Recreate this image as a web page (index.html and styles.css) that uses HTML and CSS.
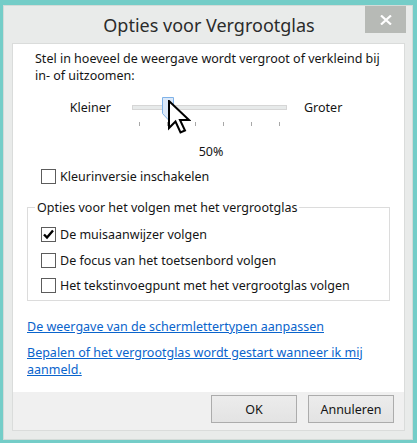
FILE: index.html
```html
<!DOCTYPE html>
<html lang="nl">
<head>
<meta charset="utf-8">
<title>Opties voor Vergrootglas</title>
<link rel="stylesheet" href="styles.css">
</head>
<body>
<div class="window">
  <div class="titlebar">
    <span class="title">Opties voor Vergrootglas</span>
    <div class="close"><svg width="12" height="10" viewBox="0 0 12 10"><path d="M1 0.5 L11 9.5 M11 0.5 L1 9.5" stroke="#fff" stroke-width="2.2"/></svg></div>
  </div>
  <div class="panel">
    <div class="content">
      <p class="intro">Stel in hoeveel de weergave wordt vergroot of verkleind bij<br>in- of uitzoomen:</p>
      <div class="slider-row">
        <span class="lbl-left">Kleiner</span>
        <div class="slider">
          <div class="track"></div>
          <svg class="thumb" width="12" height="23" viewBox="0 0 12 23"><path d="M0.5 0.5 H11.5 V16.5 L6 22.5 L0.5 16.5 Z" fill="#dce9f9" stroke="#7fb2e8"/></svg>
          <div class="ticks"><i></i><i></i><i></i><i></i><i></i><i></i></div>
          <svg class="cursor" width="23" height="34" viewBox="0 0 23 34"><path d="M1 1 V28 L7.5 21.5 L12.5 32.5 L17 30.5 L12 20 H21 Z" fill="#fff" stroke="#000" stroke-width="2" stroke-linejoin="miter"/></svg>
        </div>
        <span class="lbl-right">Groter</span>
      </div>
      <div class="percent">50%</div>
      <div class="check first"><span class="box"></span>Kleurinversie inschakelen</div>
      <fieldset class="group">
        <legend>Opties voor het volgen met het vergrootglas</legend>
        <div class="check"><span class="box checked"><svg width="13" height="13" viewBox="0 0 13 13"><path d="M2 6.5 L5 9.5 L11 2.5" fill="none" stroke="#000" stroke-width="2.4"/></svg></span>De muisaanwijzer volgen</div>
        <div class="check"><span class="box"></span>De focus van het toetsenbord volgen</div>
        <div class="check"><span class="box"></span>Het tekstinvoegpunt met het vergrootglas volgen</div>
      </fieldset>
      <a class="link l1" href="#">De weergave van de schermlettertypen aanpassen</a>
      <a class="link l2" href="#">Bepalen of het vergrootglas wordt gestart wanneer ik mij<br>aanmeld.</a>
    </div>
    <div class="footer">
      <button class="btn">OK</button>
      <button class="btn">Annuleren</button>
    </div>
  </div>
</div>
</body>
</html>
```
FILE: styles.css
```css
html, body {
  margin: 0;
  padding: 0;
  background: #74cdc8;
}
body {
  font-family: "Noto Sans", "Open Sans", sans-serif;
  font-size: 12.5px;
  color: #151515;
  width: 417px;
  height: 443px;
  overflow: hidden;
}
.window {
  position: relative;
  margin: 5px 0 0 3px;
  width: 410px;
  height: 435px;
  box-sizing: border-box;
  border: 1px solid #d3dbd8;
  background: #e9ebea;
  padding: 0 7px 8px 8px;
  display: flex;
  flex-direction: column;
}
.titlebar {
  height: 37px;
  display: flex;
  align-items: center;
  justify-content: center;
  flex: none;
}
.title {
  font-size: 18px;
  color: #2b2b2b;
  margin-top: 1px;
  margin-left: 1px;
}
.close {
  position: absolute;
  top: 0;
  right: 6px;
  width: 41px;
  height: 27px;
  background: #b7bab6;
  display: flex;
  align-items: center;
  justify-content: center;
}
.panel {
  flex: 1;
  border: 1px solid #dadcdb;
  background: #fff;
  display: flex;
  flex-direction: column;
}
.content {
  flex: 1;
  padding: 6px 14px 0 14px;
  line-height: 17px;
}
.intro {
  margin: 0 0 0 8px;
}
.slider-row {
  display: grid;
  grid-template-columns: 105px 155px 1fr;
  margin-top: 13px;
  height: 30px;
}
.lbl-left {
  text-align: right;
  padding-right: 21px;
  align-self: start;
  margin-top: 2px;
}
.lbl-right {
  padding-left: 17px;
  align-self: start;
  margin-top: 2px;
}
.slider {
  position: relative;
  height: 30px;
}
.track {
  margin-top: 8px;
  height: 3px;
  border: 1px solid #d6d6d6;
  background: #e7eaea;
}
.ticks {
  display: flex;
  justify-content: space-between;
  margin: 12px 7px 0 7px;
}
.ticks i {
  display: block;
  width: 1px;
  height: 4px;
  background: #a8a8a8;
}
.thumb {
  position: absolute;
  left: 30px;
  top: 0;
}
.cursor {
  position: absolute;
  left: 36px;
  top: 3px;
}
.percent {
  margin-top: 16px;
  text-align: center;
  padding-left: 5px;
}
.check {
  display: flex;
  align-items: center;
  height: 17px;
  margin-left: 14px;
}
.check.first {
  margin-top: 8px;
}
.box {
  width: 13px;
  height: 13px;
  border: 1px solid #5c5c5c;
  background: #fff;
  margin-right: 4px;
  flex: none;
  position: relative;
}
.box svg {
  display: block;
}
.group {
  margin: 14px 0 0 0;
  padding: 0 0 6px 7px;
  border: 1px solid #dcdcdc;
  min-width: 0;
}
.group legend {
  padding: 0 2px;
  line-height: 17px;
}
.group .check {
  margin-left: 6px;
  margin-top: 8.5px;
}
.group legend + .check {
  margin-top: 10px;
}
.link {
  display: block;
  color: #0a64cc;
  text-decoration: underline;
}
.l1 {
  margin-top: 17px;
}
.l2 {
  margin-top: 9px;
}
.footer {
  height: 38px;
  background: #f0f0f0;
  display: flex;
  justify-content: flex-end;
  align-items: flex-start;
  padding: 3px 10px 0 0;
  box-sizing: border-box;
  gap: 11px;
  flex: none;
}
.btn {
  width: 86px;
  height: 28px;
  border: 1px solid #acacac;
  background: linear-gradient(#ececec, #e3e3e3);
  font-family: inherit;
  font-size: 12.5px;
  color: #151515;
  padding: 0;
}
```
